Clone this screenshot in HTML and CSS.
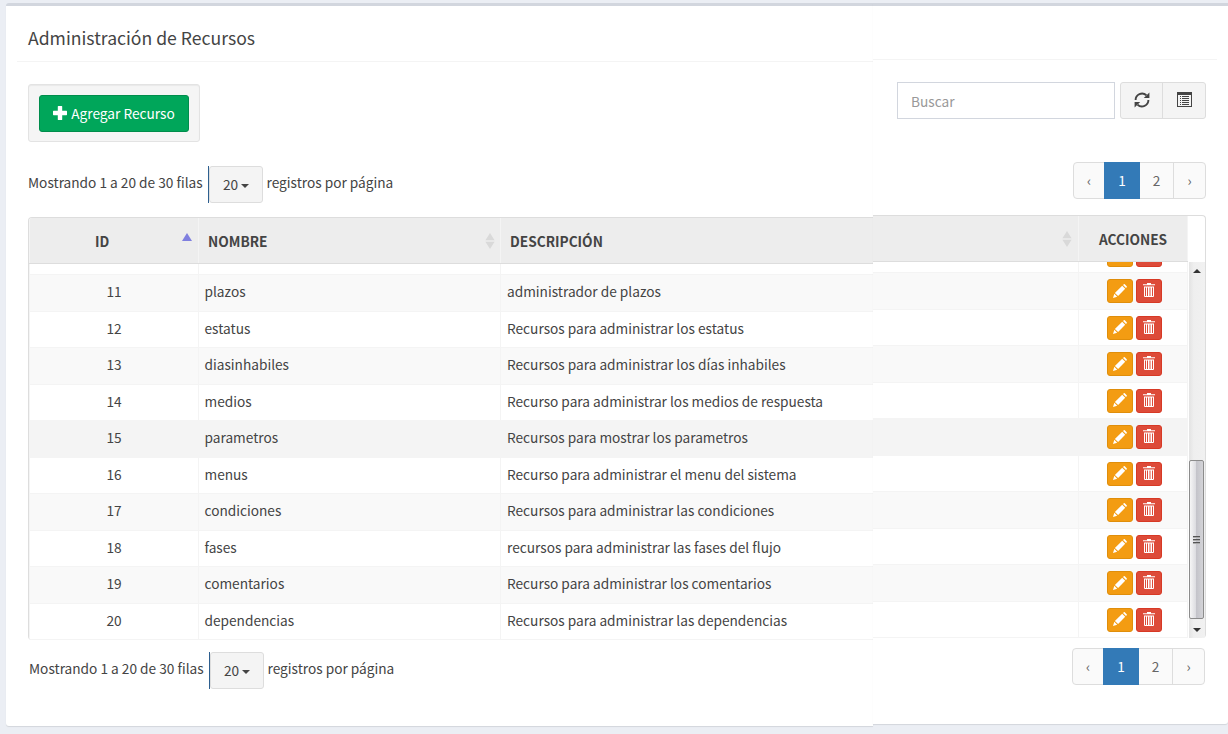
FILE: index.html
```
<!DOCTYPE html>
<html lang="es">
<head>
<meta charset="utf-8">
<title>Administración de Recursos</title>
<link rel="stylesheet" href="styles.css">
</head>
<body>
<svg class="defs" aria-hidden="true">
  <symbol id="pencil" viewBox="0 0 14 14"><path d="M0 14 1.3 9.8 4.2 12.7zM1.9 8.9 9.2 1.8 12.2 4.8 5.1 12.1zM10 1 10.8.3Q11.3-.1 11.8.3L13.7 2.2Q14.1 2.7 13.7 3.2L13 4z"/></symbol>
  <symbol id="trash" viewBox="0 0 12 14"><path fill-rule="evenodd" d="M4 0h4v1.2h4v1H0v-1h4zM1 3.4h10V13q0 1-1 1H2q-1 0-1-1zM2 4.4V13h1V4.4zM4 4.4V13h1V4.4zM6.5 4.4V13h1V4.4zM9 4.4V13h1V4.4z"/></symbol>
  <symbol id="refresh" viewBox="0 0 16 16"><path d="M1.6 8A6.4 6.4 0 0 1 12.4 3.3M14.4 8A6.4 6.4 0 0 1 3.6 12.7" fill="none" stroke="currentColor" stroke-width="1.9"/><path d="M15.4.4V6H9.8zM.6 15.6V10h5.6z"/></symbol>
  <symbol id="listalt" viewBox="0 0 15 15"><path fill-rule="evenodd" d="M0 0h15v15H0zM1 3v11h13V3zM3 4h1v1H3zM5 4h7v1H5zM3 6h1v1H3zM5 6h7v1H5zM3 8h1v1H3zM5 8h7v1H5zM3 10h1v1H3zM5 10h7v1H5zM3 12h1v1H3zM5 12h7v1H5z"/></symbol>
  <symbol id="plus" viewBox="0 0 14 14"><path d="M5.4 0h3.2q.6 0 .6.6v4.2h4.2q.6 0 .6.6v3.2q0 .6-.6.6H9.2v4.2q0 .6-.6.6H5.4q-.6 0-.6-.6V9.2H.6Q0 9.2 0 8.6V5.4q0-.6.6-.6h4.2V.6q0-.6.6-.6z"/></symbol>
  <symbol id="sort" viewBox="0 0 10 16"><path d="M5 0 9.6 7.2H.4zM5 16 .4 8.8h9.2z"/></symbol>
</svg>
<div class="page">
  <section class="pane pane-main">
    <header class="box-header"><h3>Administración de Recursos</h3></header>
    <div class="well"><button class="btn-add"><svg><use href="#plus"/></svg><span>Agregar Recurso</span></button></div>
    <div class="info"><span>Mostrando 1 a 20 de 30 filas</span><div class="dd-wrap"><button class="dd">20<i></i></button></div><span>registros por página</span></div>
    <div class="grid grid-main">
      <div class="row head"><div class="id">ID<i class="asc"></i></div><div class="name">NOMBRE<svg class="sort"><use href="#sort"/></svg></div><div class="desc">DESCRIPCIÓN</div></div>
      <div class="view">
        <div class="rows">
          <div class="row"><div class="id"></div><div class="name"></div><div class="desc"></div></div>
          <div class="row odd"><div class="id">11</div><div class="name">plazos</div><div class="desc">administrador de plazos</div></div>
          <div class="row"><div class="id">12</div><div class="name">estatus</div><div class="desc">Recursos para administrar los estatus</div></div>
          <div class="row odd"><div class="id">13</div><div class="name">diasinhabiles</div><div class="desc">Recursos para administrar los días inhabiles</div></div>
          <div class="row"><div class="id">14</div><div class="name">medios</div><div class="desc">Recurso para administrar los medios de respuesta</div></div>
          <div class="row hover"><div class="id">15</div><div class="name">parametros</div><div class="desc">Recursos para mostrar los parametros</div></div>
          <div class="row"><div class="id">16</div><div class="name">menus</div><div class="desc">Recurso para administrar el menu del sistema</div></div>
          <div class="row odd"><div class="id">17</div><div class="name">condiciones</div><div class="desc">Recursos para administrar las condiciones</div></div>
          <div class="row"><div class="id">18</div><div class="name">fases</div><div class="desc">recursos para administrar las fases del flujo</div></div>
          <div class="row odd"><div class="id">19</div><div class="name">comentarios</div><div class="desc">Recurso para administrar los comentarios</div></div>
          <div class="row"><div class="id">20</div><div class="name">dependencias</div><div class="desc">Recursos para administrar las dependencias</div></div>
        </div>
      </div>
    </div>
    <div class="info info-bottom"><span>Mostrando 1 a 20 de 30 filas</span><div class="dd-wrap"><button class="dd">20<i></i></button></div><span>registros por página</span></div>
  </section>
  <section class="pane pane-side">
    <header class="box-header"></header>
    <div class="tools">
      <input class="search" type="text" placeholder="Buscar">
      <div class="group"><button><svg class="i16"><use href="#refresh"/></svg></button><button><svg class="i15"><use href="#listalt"/></svg></button></div>
    </div>
    <nav class="pages"><a>‹</a><a class="on">1</a><a>2</a><a>›</a></nav>
    <div class="grid grid-side">
      <div class="row head"><div class="fill"><svg class="sort"><use href="#sort"/></svg></div><div class="act">ACCIONES</div></div>
      <div class="view">
        <div class="rows">
          <div class="row"><div class="fill"></div><div class="act"><button class="edit"><svg><use href="#pencil"/></svg></button><button class="del"><svg><use href="#trash"/></svg></button></div></div>
          <div class="row odd"><div class="fill"></div><div class="act"><button class="edit"><svg><use href="#pencil"/></svg></button><button class="del"><svg><use href="#trash"/></svg></button></div></div>
          <div class="row"><div class="fill"></div><div class="act"><button class="edit"><svg><use href="#pencil"/></svg></button><button class="del"><svg><use href="#trash"/></svg></button></div></div>
          <div class="row odd"><div class="fill"></div><div class="act"><button class="edit"><svg><use href="#pencil"/></svg></button><button class="del"><svg><use href="#trash"/></svg></button></div></div>
          <div class="row"><div class="fill"></div><div class="act"><button class="edit"><svg><use href="#pencil"/></svg></button><button class="del"><svg><use href="#trash"/></svg></button></div></div>
          <div class="row hover"><div class="fill"></div><div class="act"><button class="edit"><svg><use href="#pencil"/></svg></button><button class="del"><svg><use href="#trash"/></svg></button></div></div>
          <div class="row"><div class="fill"></div><div class="act"><button class="edit"><svg><use href="#pencil"/></svg></button><button class="del"><svg><use href="#trash"/></svg></button></div></div>
          <div class="row odd"><div class="fill"></div><div class="act"><button class="edit"><svg><use href="#pencil"/></svg></button><button class="del"><svg><use href="#trash"/></svg></button></div></div>
          <div class="row"><div class="fill"></div><div class="act"><button class="edit"><svg><use href="#pencil"/></svg></button><button class="del"><svg><use href="#trash"/></svg></button></div></div>
          <div class="row odd"><div class="fill"></div><div class="act"><button class="edit"><svg><use href="#pencil"/></svg></button><button class="del"><svg><use href="#trash"/></svg></button></div></div>
          <div class="row"><div class="fill"></div><div class="act"><button class="edit"><svg><use href="#pencil"/></svg></button><button class="del"><svg><use href="#trash"/></svg></button></div></div>
        </div>
        <div class="scroll"><i class="up"></i><div class="thumb"><b></b><b></b><b></b></div><i class="down"></i></div>
      </div>
    </div>
    <nav class="pages pages-bottom"><a>‹</a><a class="on">1</a><a>2</a><a>›</a></nav>
  </section>
</div>
</body>
</html>
```
FILE: styles.css
```
* { box-sizing: border-box; }
body {
  margin: 0;
  height: 734px;
  overflow: hidden;
  background: #ebeef4;
  color: #444;
  font: 13.68px/20px "Noto Sans CJK SC", "Noto Sans", sans-serif;
}
button, input { font: inherit; color: inherit; margin: 0; padding: 0; }
svg { fill: currentColor; display: block; flex: none; overflow: visible; }
.defs { position: absolute; width: 0; height: 0; }

.page { display: flex; align-items: flex-start; padding: 3px 0 0 6px; }
.pane { background: #fff; border-top: 3px solid #d2d6de; box-shadow: 0 1px 1px rgba(0, 0, 0, .1); }
.pane-main { width: 867px; height: 723px; border-radius: 3px 0 0 3px; padding-left: 22px; }
.pane-side { width: 355px; height: 721px; border-radius: 0 0 3px 0; }

.box-header { border-bottom: 1px solid #f4f4f4; }
.pane-main .box-header { height: 56px; margin-left: -11px; padding: 20px 0 0 11px; }
.pane-side .box-header { height: 54px; width: 344px; }
h3 { margin: 0; font-size: 17.6px; line-height: 24px; font-weight: 400; }

.well {
  width: 172px; height: 58px; margin-top: 22px; padding: 10px;
  background: #f5f5f5; border: 1px solid #e3e3e3; border-radius: 3px;
  box-shadow: inset 0 1px 1px rgba(0, 0, 0, .05);
}
.btn-add {
  display: flex; align-items: center; justify-content: center; gap: 4px;
  width: 150px; height: 37px;
  color: #fff; background: #00a65a; border: 1px solid #008d4c; border-radius: 3px;
}
.btn-add svg { width: 14px; height: 14px; margin-top: -2px; }
.btn-add span { margin-top: -1px; }

.info { display: flex; align-items: flex-start; height: 37px; margin-top: 24px; white-space: nowrap; }
.info > span { margin-top: 6px; }
.info > span:first-child { width: 180px; }
.info-bottom { margin: 12px 0 0 1px; }
.dd-wrap { border-left: 1px solid #2d5f8f; margin-right: 3.5px; }
.dd {
  display: flex; align-items: center; justify-content: center; gap: 3px;
  width: 54px; height: 37px; padding-bottom: 1px;
  background: #f4f4f4; border: 1px solid #ddd; border-radius: 3px;
}
.dd i { margin-top: 3px; border: 4px solid transparent; border-top-color: #444; border-bottom: 0; }

.grid-main { margin-top: 14px; border: 1px solid #ddd; border-right: 0; border-bottom: 0; border-radius: 4px 0 0 4px; overflow: hidden; }
.row { display: flex; height: 36.5px; border-top: 1px solid #f4f4f4; line-height: 20px; }
.row > div { display: flex; align-items: center; flex: none; }
.grid-main .rows .row > div { padding-bottom: 3.2px; }
.odd { background: #f9f9f9; }
.hover { background: #f4f4f4; }
.head { height: 46px; background: #ededed; border-top: 0; border-bottom: 1px solid #ddd; font-weight: 700; }
.head > div { padding-top: 1px; }
.view { display: flex; overflow: hidden; height: 376px; }
.rows { flex: none; margin-top: -26px; border-bottom: 1px solid #f4f4f4; }
.grid-main .rows { flex: 1; margin-top: -26.4px; }
.id { width: 169px; justify-content: center; border-left: 1px solid #f4f4f4; }
.name { width: 302px; padding-left: 5.5px; border-left: 1px solid #f4f4f4; }
.desc { width: 373px; padding-left: 6px; border-left: 1px solid #f4f4f4; }
.head .id { justify-content: flex-start; padding-left: 65px; }
.head .name, .head .desc { padding-left: 9px; }
.asc { margin: -9px 6px 0 auto; border: 5px solid transparent; border-bottom: 8px solid #7f7fdf; border-top: 0; }
.sort { width: 10px; height: 16px; color: #d9d9d9; margin: 0 5px 0 auto; }
.fill .sort { margin-right: 6px; }

.tools { display: flex; gap: 5px; margin: 22px 0 0 24px; }
.search { width: 218px; height: 37px; padding: 0 13px; border: 1px solid #d2d6de; background: #fff; outline: 0; }
.search::placeholder { color: #999; opacity: 1; }
.group { display: flex; width: 86px; height: 37px; border: 1px solid #ddd; border-radius: 3px; background: #f4f4f4; }
.group button { display: flex; width: 41px; align-items: center; justify-content: center; border: 0; background: none; padding-bottom: 2px; }
.group button + button { width: 43px; border-left: 1px solid #ddd; }
.i16 { width: 16px; height: 16px; }
.i15 { width: 15px; height: 15px; }

.pages { display: flex; width: 133px; height: 37px; margin: 43px 0 0 200px; border: 1px solid #ddd; border-radius: 4px; background: #fafafa; color: #666; }
.pages a { display: flex; align-items: center; justify-content: center; width: 33px; padding-bottom: 1px; }
.pages a:first-child { width: 30px; }
.pages a:last-child { width: 32px; border-left: 1px solid #ddd; }
.pages .on { width: 36px; margin: -1px 0; background: #337ab7; color: #fff; }
.pages-bottom { margin: 10px 0 0 199px; }

.grid-side { width: 333px; height: 423px; margin-top: 16px; border-top: 1px solid #ddd; border-right: 1px solid #ddd; border-radius: 0 4px 4px 0; overflow: hidden; }
.grid-side .row { width: 315px; }
.fill { width: 205px; }
.act { width: 110px; gap: 3px; justify-content: center; border-left: 1px solid #f4f4f4; border-right: 1px solid #f4f4f4; }
.rows .act { padding-left: 2px; }
.grid-side .rows { margin-top: -26.4px; }
.edit, .del { display: flex; align-items: center; justify-content: center; width: 26px; height: 24px; margin-top: 1px; border-radius: 3px; color: #fff; }
.edit { background: #f39c12; border: 1px solid #e08e0b; }
.del { background: #dd4b39; border: 1px solid #d73925; }
.edit svg { width: 14px; height: 14px; margin-top: -1px; }
.del svg { width: 12px; height: 14px; margin-top: -2px; }
.scroll {
  display: flex; flex-direction: column; align-items: flex-start; width: 16px; margin-left: 1px;
  background: linear-gradient(90deg, #e3e3e3, #efefef 30%, #f1f1f1);
}
.up { margin: 7px 0 0 4px; border: 4px solid transparent; border-top: 0; border-bottom: 4px solid #333; }
.down { margin: 9px 0 0 4px; border: 4px solid transparent; border-bottom: 0; border-top: 4px solid #333; }
.thumb {
  display: flex; flex-direction: column; align-items: center; justify-content: center; gap: 1px;
  width: 15px; height: 159px; margin-top: 187px;
  border: 1px solid #8c8c8c; border-radius: 2px;
  background: linear-gradient(90deg, #f6f6f6, #dcdce0 45%, #c4c4ca 50%, #d4d4d8);
}
.thumb b { width: 7px; height: 2px; background: #555; border-bottom: 1px solid #aaa; }
```
